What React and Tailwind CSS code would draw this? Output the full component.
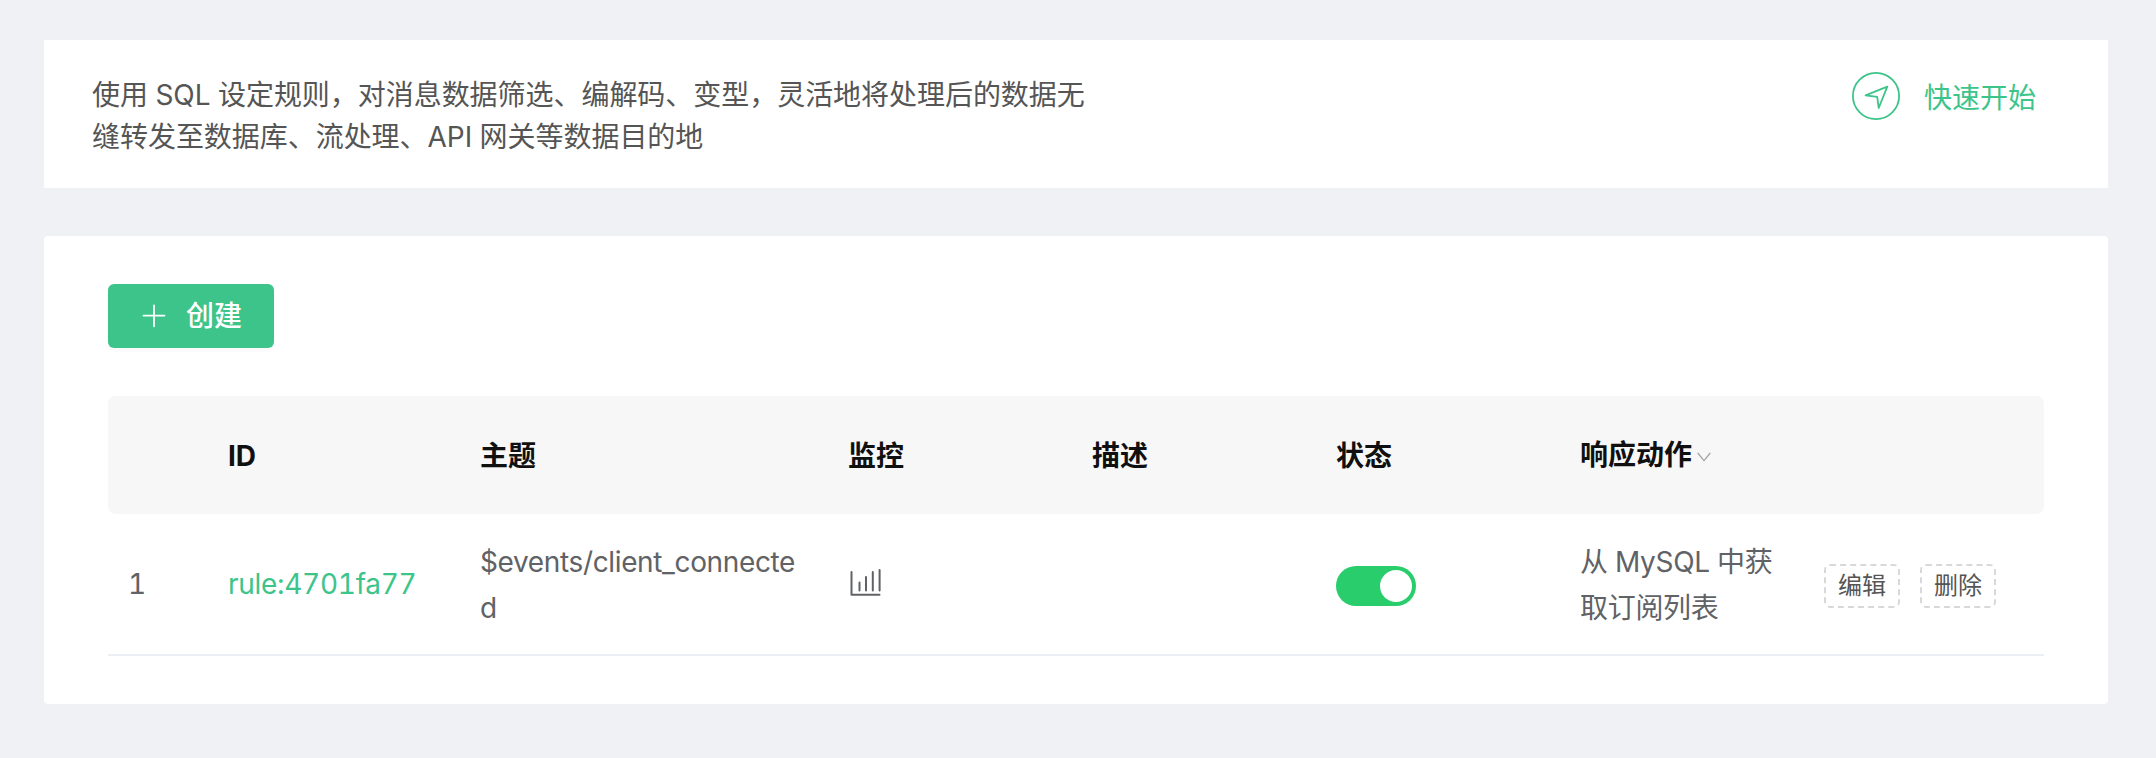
const columns = [
  { key: 'index', label: '', width: 'w-[100px]' },
  { key: 'id', label: 'ID', width: 'w-[252px]' },
  { key: 'topic', label: '主题', width: 'w-[368px]' },
  { key: 'monitor', label: '监控', width: 'w-[244px]' },
  { key: 'description', label: '描述', width: 'w-[244px]' },
  { key: 'status', label: '状态', width: 'w-[244px]' },
  { key: 'actions', label: '响应动作', width: 'w-[244px]', sortable: true },
  { key: 'operations', label: '', width: 'w-[240px]' },
];

function SendIcon() {
  return (
    <svg className="size-12" viewBox="0 0 48 48" fill="none" stroke="currentColor">
      <circle cx="24" cy="24" r="23.1" strokeWidth="1.8" />
      <path d="M13.600 23.300 35.300 14.700 26.700 36 25.200 24.900Z" strokeWidth="1.8" strokeLinejoin="round" />
    </svg>
  );
}

function PlusIcon() {
  return (
    <svg className="size-6" viewBox="0 0 24 24" stroke="currentColor" strokeWidth="1.8" strokeLinecap="round">
      <path d="M12 1.300v21M1.500 11.600h21" />
    </svg>
  );
}

function ChartIcon() {
  return (
    <svg className="mb-1 h-7 w-[34px]" viewBox="0 0 34 28" fill="none" stroke="currentColor" strokeWidth="2" strokeLinecap="round" strokeLinejoin="round">
      <path d="M3.500 4v22.800H31.500M11.500 14.500v8M18 9v13.500M24.800 4v18.500M31.600 2v20.500" />
    </svg>
  );
}

function ChevronIcon() {
  return (
    <svg className="mt-1 h-[10px] w-[14px]" viewBox="0 0 14 10" fill="none" stroke="#a0a0a0" strokeWidth="1.2">
      <path d="M0.700 1 7 8.600 13.300 1" />
    </svg>
  );
}

function SmallButton({ children }) {
  return (
    <button className="h-11 w-[76px] rounded-md border-2 border-dashed border-[#d8d8d8] text-2xl leading-10 text-[#555]">
      {children}
    </button>
  );
}

function Cell({ width, children }) {
  return <td className={`${width} px-5 align-middle`}>{children}</td>;
}

export default function App() {
  return (
    <main className="flex h-[758px] w-[2156px] flex-col gap-12 bg-[#f0f1f5] pt-10 pr-12 pl-11 font-['Inter','Noto_Sans_CJK_SC',sans-serif] text-[28px] text-[#606266] tabular-nums">
      <section className="flex h-[148px] items-start justify-between bg-white pr-18 pl-12 text-[#555]">
        <p className="mt-[34px] w-[1000px] leading-[42px] tracking-[-0.04px]">
          使用 SQL 设定规则，对消息数据筛选、编解码、变型，灵活地将处理后的数据无
          <br />
          缝转发至数据库、流处理、API 网关等数据目的地
        </p>
        <a className="mt-8 flex items-center gap-6 text-[#3dc48a]">
          <SendIcon />
          <span className="pt-1 leading-[42px]">快速开始</span>
        </a>
      </section>

      <section className="h-[468px] rounded bg-white px-16 pt-12">
        <button className="flex h-16 w-[166px] items-center gap-5 rounded-md bg-[#3dc48a] pl-[34px] font-medium text-white shadow-[0_4px_0_rgba(0,0,0,0.015)]">
          <PlusIcon />
          <span>创建</span>
        </button>

        <table className="mt-12 w-[1936px] table-fixed border-separate border-spacing-0">
          <thead>
            <tr className="h-[118px]">
              {columns.map((column) => (
                <th
                  key={column.key}
                  className={`${column.width} bg-[#f7f7f7] px-5 text-left font-bold text-[#101010] first:rounded-l-lg last:rounded-r-lg`}
                >
                  <div className={column.sortable ? 'flex items-center gap-[5px]' : 'pt-0.5'}>
                    <span>{column.label}</span>
                    {column.sortable && <ChevronIcon />}
                  </div>
                </th>
              ))}
            </tr>
          </thead>
          <tbody>
            <tr className="h-[142px] *:border-b-2 *:border-[#ebeef5]">
              <Cell width="w-[100px]">1</Cell>
              <Cell width="w-[252px]">
                <a className="tracking-[-0.3px] text-[#3dc48a]">rule:4701fa77</a>
              </Cell>
              <Cell width="w-[368px]">
                <p className="pt-0.5 leading-[46px] tracking-[-0.36px] break-all">$events/client_connected</p>
              </Cell>
              <Cell width="w-[244px]">
                <ChartIcon />
              </Cell>
              <Cell width="w-[244px]" />
              <Cell width="w-[244px]">
                <div className="mt-1 flex h-10 w-20 items-center justify-end rounded-full bg-[#29cd6b] pr-1">
                  <span className="size-8 rounded-full bg-white" />
                </div>
              </Cell>
              <Cell width="w-[244px]">
                <p className="pt-0.5 leading-[46px] tracking-[-0.3px]">从 MySQL 中获取订阅列表</p>
              </Cell>
              <Cell width="w-[240px]">
                <div className="mt-1 flex gap-5">
                  <SmallButton>编辑</SmallButton>
                  <SmallButton>删除</SmallButton>
                </div>
              </Cell>
            </tr>
          </tbody>
        </table>
      </section>
    </main>
  );
}
